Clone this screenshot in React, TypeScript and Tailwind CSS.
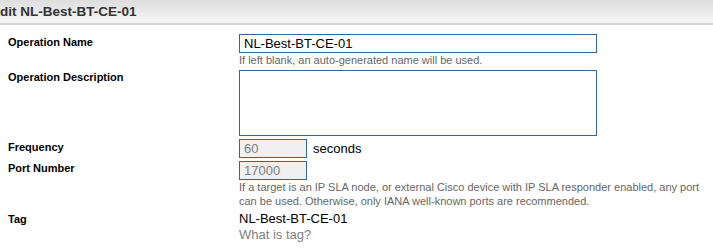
export default function App() {
  const label = "text-[11px] font-bold text-black leading-[14px]";
  const help = "text-[11px] leading-[14px] text-[#666]";

  return (
    <div className="min-h-[250px] w-[713px] overflow-hidden bg-white font-['Liberation_Sans',Arial,sans-serif]">
      {/* Title bar */}
      <div className="h-[25px] overflow-hidden border-b-2 border-[#d6d6d6] bg-gradient-to-b from-[#dedede] to-[#f5f5f5]">
        <div className="-ml-[9px] whitespace-nowrap pt-[4px] text-[13.5px] font-bold leading-[16px] text-[#333]">
          Edit NL-Best-BT-CE-01
        </div>
      </div>

      <div className="pl-2 pt-[9px]">
        {/* Operation name */}
        <div className="flex">
          <div className={`w-[231px] shrink-0 pt-[1px] ${label}`}>Operation Name</div>
          <div>
            <input
              readOnly
              value="NL-Best-BT-CE-01"
              className="box-border block h-[19px] w-[358px] border border-[#336699] bg-white px-[4px] text-[13px] leading-[17px] text-black outline-none"
            />
            <div className={help}>If left blank, an auto-generated name will be used.</div>
          </div>
        </div>

        {/* Description */}
        <div className="mt-[3px] flex">
          <div className={`w-[231px] shrink-0 ${label}`}>Operation Description</div>
          <textarea
            readOnly
            className="box-border block h-[66px] w-[358px] resize-none border border-[#336699] bg-white outline-none"
          />
        </div>

        {/* Frequency */}
        <div className="mt-[3px] flex h-[19px]">
          <div className={`w-[231px] shrink-0 pt-[1px] ${label}`}>Frequency</div>
          <div className="flex items-center gap-[6px]">
            <input
              readOnly
              value="60"
              className="box-border block h-[19px] w-[68px] border border-[#336699] bg-[#f0f0f0] px-[4px] text-[13px] text-[#808080] outline-none"
            />
            <span className="text-[13px] leading-[19px] text-black">seconds</span>
          </div>
        </div>

        {/* Port */}
        <div className="mt-[3px] flex">
          <div className={`w-[231px] shrink-0 ${label}`}>Port Number</div>
          <div className="w-[464px]">
            <input
              readOnly
              value="17000"
              className="box-border block h-[19px] w-[68px] border border-[#336699] bg-[#f0f0f0] px-[4px] text-[13px] text-[#808080] outline-none"
            />
            <div className={help}>
              If a target is an IP SLA node, or external Cisco device with IP SLA responder enabled, any port
              can be used. Otherwise, only IANA well-known ports are recommended.
            </div>
          </div>
        </div>

        {/* Tag */}
        <div className="mt-[3px] flex">
          <div className={`w-[231px] shrink-0 pt-[1px] ${label}`}>Tag</div>
          <div className="text-[13px] leading-[16px]">
            <div className="text-black">NL-Best-BT-CE-01</div>
            <div className="text-[#808080]">What is tag?</div>
          </div>
        </div>
      </div>
    </div>
  );
}
